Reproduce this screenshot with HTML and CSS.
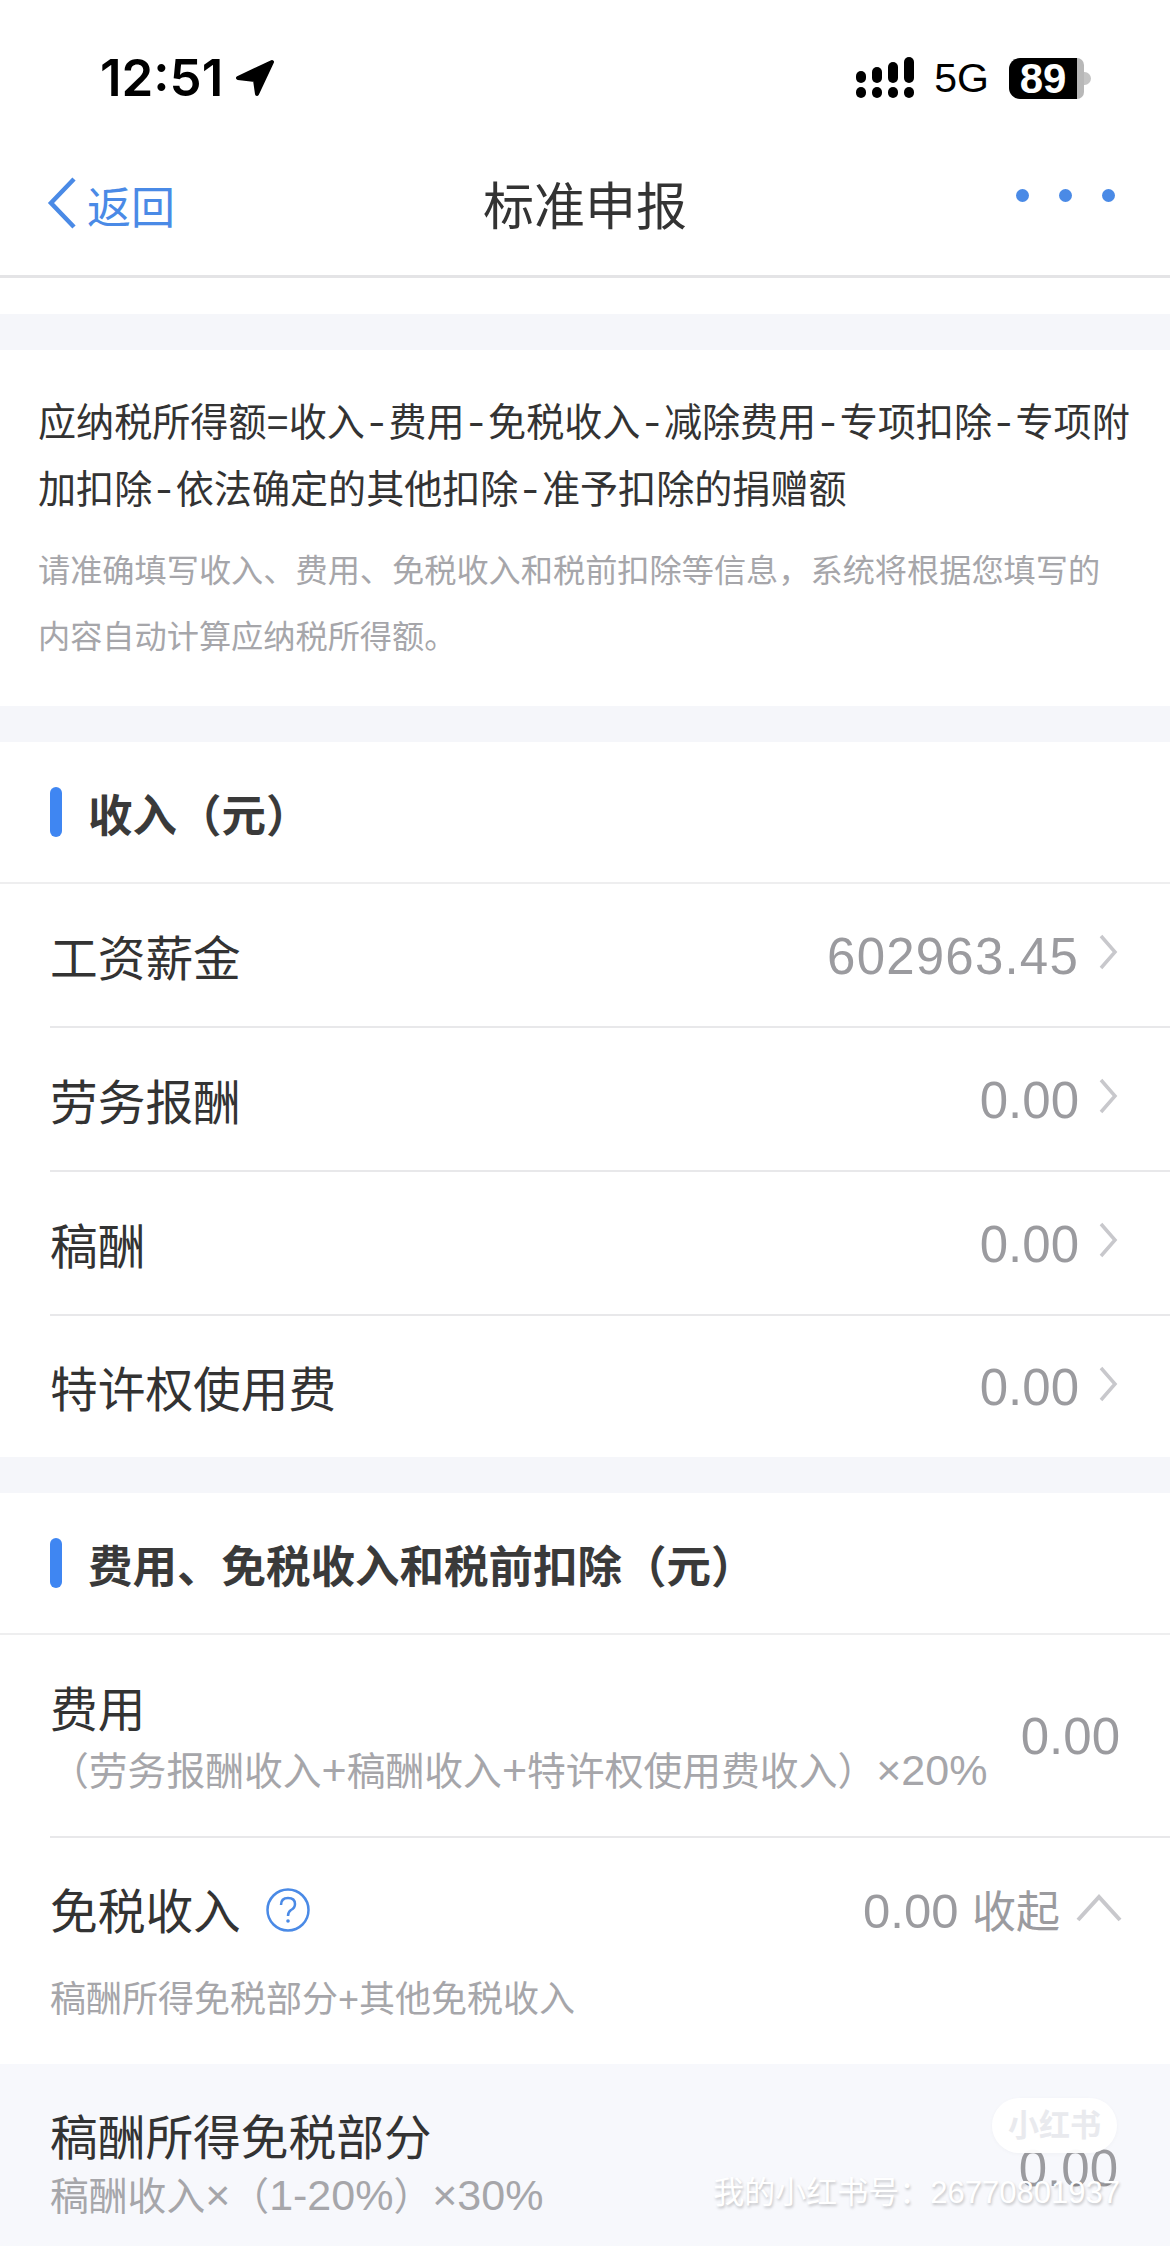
FILE: index.html
```html
<!DOCTYPE html>
<html lang="zh-CN">
<head>
    <meta charset="UTF-8">
    <meta name="viewport" content="width=device-width, initial-scale=1.0">
    <title>标准申报</title>
    <link rel="stylesheet" href="styles.css">
</head>
<body>
    <div class="status">
        <div class="status-time">12:51
            <svg class="status-arrow" width="40" height="38" viewBox="0 0 40 38"><path d="M37 3 L3 19 L20 21 L22 35 Z" fill="#000" stroke="#000" stroke-width="4" stroke-linejoin="round"/></svg>
        </div>
        <div class="status-right">
            <svg width="58" height="42" viewBox="0 0 58 42" fill="#000">
                <rect x="0" y="14" width="10" height="12" rx="5"/><rect x="16" y="10" width="10" height="16" rx="5"/><rect x="32" y="5" width="10" height="21" rx="5"/><rect x="48" y="0" width="10" height="26" rx="5"/>
                <rect x="0" y="30" width="10" height="11" rx="5"/><rect x="16" y="30" width="10" height="11" rx="5"/><rect x="32" y="30" width="10" height="11" rx="5"/><rect x="48" y="30" width="10" height="11" rx="5"/>
            </svg>
            <span class="status-net">5G</span>
            <div class="battery"><span class="battery-num">89</span><i class="battery-rest"></i><i class="battery-cap"></i></div>
        </div>
    </div>

    <div class="nav">
        <div class="nav-back">
            <svg width="30" height="52" viewBox="0 0 30 52"><path d="M27 2 L4 26 L27 50" fill="none" stroke="#4a8ae6" stroke-width="4.5"/></svg>
            <span class="nav-back-text">返回</span>
        </div>
        <div class="nav-title">标准申报</div>
        <div class="nav-more"><i></i><i></i><i></i></div>
    </div>

    <div class="band band-first"></div>

    <div class="intro">
        <p class="formula">应纳税所得额=收入<span class="dash">-</span>费用<span class="dash">-</span>免税收入<span class="dash">-</span>减除费用<span class="dash">-</span>专项扣除<span class="dash">-</span>专项附<br>加扣除<span class="dash">-</span>依法确定的其他扣除<span class="dash">-</span>准予扣除的捐赠额</p>
        <p class="hint">请准确填写收入、费用、免税收入和税前扣除等信息，系统将根据您填写的内容自动计算应纳税所得额。</p>
    </div>

    <div class="band"></div>

    <div class="head"><i class="head-bar"></i><span>收入（元）</span></div>
    <div class="row">
        <span class="label">工资薪金</span>
        <span class="value value-long">602963.45</span>
        <svg class="chev" width="20" height="36" viewBox="0 0 20 36"><path d="M3 2 L17 18 L3 34" fill="none" stroke="#c8c8cc" stroke-width="3.5"/></svg>
    </div>
    <div class="row">
        <span class="label">劳务报酬</span>
        <span class="value">0.00</span>
        <svg class="chev" width="20" height="36" viewBox="0 0 20 36"><path d="M3 2 L17 18 L3 34" fill="none" stroke="#c8c8cc" stroke-width="3.5"/></svg>
    </div>
    <div class="row">
        <span class="label">稿酬</span>
        <span class="value">0.00</span>
        <svg class="chev" width="20" height="36" viewBox="0 0 20 36"><path d="M3 2 L17 18 L3 34" fill="none" stroke="#c8c8cc" stroke-width="3.5"/></svg>
    </div>
    <div class="row row-last">
        <span class="label">特许权使用费</span>
        <span class="value">0.00</span>
        <svg class="chev" width="20" height="36" viewBox="0 0 20 36"><path d="M3 2 L17 18 L3 34" fill="none" stroke="#c8c8cc" stroke-width="3.5"/></svg>
    </div>

    <div class="band"></div>

    <div class="head"><i class="head-bar"></i><span>费用、免税收入和税前扣除（元）</span></div>
    <div class="row row-fee">
        <div class="stack">
            <span class="label">费用</span>
            <span class="note">（劳务报酬收入<span class="lat">+</span>稿酬收入<span class="lat">+</span>特许权使用费收入）<span class="lat">×20%</span></span>
        </div>
        <span class="value">0.00</span>
    </div>

    <div class="exempt">
        <div class="exempt-top">
            <span class="label">免税收入</span>
            <svg class="help" width="44" height="44" viewBox="0 0 44 44">
                <circle cx="22" cy="22" r="20.5" fill="none" stroke="#4a8ae6" stroke-width="2.5"/>
                <path d="M15 17 Q15 10 22 10 Q29 10 29 16 Q29 20 25 22 Q22 24 22 28" fill="none" stroke="#4a8ae6" stroke-width="2.5"/>
                <circle cx="22" cy="33" r="1.8" fill="#4a8ae6"/>
            </svg>
            <span class="value exempt-value">0.00 <span class="exempt-fold">收起</span></span>
            <svg class="fold" width="46" height="28" viewBox="0 0 46 28"><path d="M2 26 L23 3 L44 26" fill="none" stroke="#c8c8cc" stroke-width="4"/></svg>
        </div>
        <div class="exempt-note">稿酬所得免税部分+其他免税收入</div>
    </div>

    <div class="sub-row">
        <div class="stack">
            <span class="label">稿酬所得免税部分</span>
            <span class="note">稿酬收入<span class="lat">×</span>（<span class="lat">1-20%</span>）<span class="lat">×30%</span></span>
        </div>
        <span class="value">0.00</span>
    </div>

    <div class="mark">
        <div class="mark-pill">小红书</div>
        <div class="mark-id">我的小红书号：26770801937</div>
    </div>
</body>
</html>
```

FILE: styles.css
```css
* {
    box-sizing: border-box;
}
html, body {
    margin: 0;
    padding: 0;
}
body {
    position: relative;
    width: 1170px;
    height: 2247px;
    overflow: hidden;
    background: #fff;
    color: #333;
    font-family: "Liberation Sans", "Noto Sans CJK SC", sans-serif;
}
p {
    margin: 0;
}

/* status bar */
.status {
    height: 152px;
    padding: 54px 79px 0 100px;
    display: flex;
    justify-content: space-between;
    align-items: flex-start;
}
.status-time {
    display: flex;
    align-items: center;
    gap: 12px;
    font-family: Inter, sans-serif;
    font-size: 51px;
    font-weight: 600;
    line-height: 48px;
    color: #000;
}
.status-right {
    display: flex;
    align-items: center;
    height: 48px;
    gap: 20px;
}
.status-net {
    font-size: 41px;
    color: #000;
}
.battery {
    display: flex;
    align-items: center;
    height: 41px;
}
.battery-num {
    width: 68px;
    height: 41px;
    background: #000;
    border-radius: 11px 0 0 11px;
    color: #fff;
    font-size: 42px;
    font-weight: 700;
    line-height: 41px;
    text-align: center;
}
.battery-rest {
    width: 7px;
    height: 41px;
    background: #b8b8b8;
    border-radius: 0 9px 9px 0;
}
.battery-cap {
    width: 7px;
    height: 13px;
    background: #c4c4c4;
    border-radius: 0 7px 7px 0;
}

/* nav */
.nav {
    height: 126px;
    padding: 0 47px 22px 47px;
    display: grid;
    grid-template-columns: 1fr auto 1fr;
    align-items: center;
    border-bottom: 3px solid #e4e4e6;
}
.nav-back {
    display: flex;
    align-items: center;
    gap: 10px;
    color: #4a8ae6;
    font-size: 44px;
}
.nav-back-text {
    margin-top: 4px;
}
.nav-title {
    font-size: 51px;
    color: #333;
}
.nav-more {
    display: flex;
    justify-content: flex-end;
    gap: 30px;
    margin-right: 8px;
    margin-bottom: 14px;
}
.nav-more i {
    width: 13px;
    height: 13px;
    border-radius: 50%;
    background: #4a8ae6;
}

/* gray gaps between sections */
.band {
    height: 36px;
    background: #f5f6fa;
}
.band-first {
    margin-top: 36px;
}

.intro {
    height: 356px;
    padding: 39px 27px 0 38px;
}
.formula {
    font-size: 38.1px;
    line-height: 66px;
    color: #333;
}
.dash {
    padding: 0 3px;
    font-family: Inter, sans-serif;
}
.hint {
    padding: 15px 25px 0 0;
    font-size: 32.2px;
    line-height: 66px;
    color: #a6a6aa;
}

/* section title */
.head {
    height: 142px;
    padding-left: 50px;
    display: flex;
    align-items: center;
    gap: 26px;
    border-bottom: 2px solid #eeeeef;
    font-size: 44.5px;
    font-weight: 700;
    color: #3a3a3a;
}
.head-bar {
    width: 12px;
    height: 50px;
    border-radius: 6px;
    background: #3f86f2;
}

/* rows */
.row {
    height: 144px;
    margin-left: 50px;
    padding-right: 52px;
    display: flex;
    align-items: center;
    border-bottom: 2px solid #e8e8ea;
}
.row-last {
    height: 141px;
    border-bottom: none;
}
.label {
    font-size: 47.7px;
    color: #333;
}
.value {
    margin-left: auto;
    padding-top: 2px;
    font-size: 51px;
    color: #9b9b9f;
}
.value-long {
    letter-spacing: 1.2px;
}
.chev {
    margin-left: 19px;
    margin-top: -6px;
}
.row-fee {
    height: 203px;
    padding-right: 50px;
}
.stack {
    display: flex;
    flex-direction: column;
}
.note {
    font-size: 38.8px;
    line-height: 50px;
    color: #a6a6aa;
}
.lat {
    font-size: 43px;
    line-height: 40px;
}
.row-fee .label {
    line-height: 72px;
}

/* exempt income */
.exempt {
    height: 226px;
    padding: 34px 48px 0 50px;
}
.exempt-top {
    display: flex;
    align-items: center;
    height: 72px;
}
.help {
    margin-left: 25px;
    margin-top: 4px;
}
.exempt-value {
    margin-right: 16px;
    font-size: 49px;
}
.exempt-fold {
    font-size: 44px;
}
.exempt-note {
    margin-top: 31px;
    font-size: 36px;
    line-height: 50px;
    color: #a6a6aa;
}
.sub-row {
    height: 182px;
    padding: 41px 52px 0 50px;
    display: flex;
    align-items: flex-start;
    background: #f7f8fc;
}
.sub-row .label {
    line-height: 67px;
}
.sub-row .value {
    margin-top: 32px;
}

/* watermark sits over the last row */
.mark {
    position: absolute;
    right: 50px;
    top: 2098px;
    display: flex;
    flex-direction: column;
    align-items: flex-end;
}
.mark-pill {
    width: 125px;
    height: 55px;
    margin-right: 3px;
    border-radius: 28px;
    background: rgba(255, 255, 255, 0.95);
    box-shadow: 0 1px 4px rgba(0, 0, 0, 0.03);
    color: #e9eaee;
    font-size: 31px;
    font-weight: 700;
    line-height: 55px;
    text-align: center;
}
.mark-id {
    margin-top: 20px;
    font-size: 31px;
    line-height: 40px;
    color: #fff;
    text-shadow: 1px 2px 3px rgba(0, 0, 0, 0.22);
}
```
